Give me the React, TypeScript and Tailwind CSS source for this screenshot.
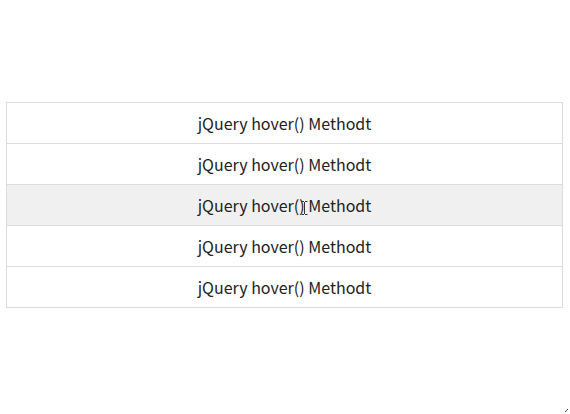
import React from "react"

const rows = [0, 1, 2, 3, 4]

export default function App() {
  return (
    <div className="w-[570px] h-[414px] bg-white relative overflow-hidden" style={{ fontFamily: '"Noto Sans CJK KR", "Noto Sans", sans-serif' }}>
      <div className="pt-[102px] pl-[6px]">
        <ul className="w-[557px] border border-[#dcdcdc]">
          {rows.map((i) => (
            <li
              key={i}
              className={`flex items-center justify-center text-[16px] text-[#222] ${i < 4 ? "h-[41px] border-b border-[#dcdcdc]" : "h-[40px]"} ${i === 2 ? "bg-[#f0f0f0] relative" : ""}`}
            >
              jQuery hover() Methodt
              {i === 2 && (
                <svg className="absolute left-[294px] top-[16px]" width="7" height="14" viewBox="0 0 7 14">
                  <path d="M0.5 0.5h2.5M4 0.5h2.5M3.5 1v12M0.5 13.5h2.5M4 13.5h2.5" stroke="#333" strokeWidth="1" fill="none" />
                </svg>
              )}
            </li>
          ))}
        </ul>
      </div>
      <svg className="absolute left-[564px] top-[408px]" width="6" height="6" viewBox="0 0 6 6">
        <rect x="3" y="1" width="1" height="1" fill="#7a2a8a" />
        <rect x="2" y="2" width="1" height="1" fill="#7a2a8a" />
        <rect x="1" y="3" width="1" height="1" fill="#7a2a8a" />
      </svg>
    </div>
  )
}
